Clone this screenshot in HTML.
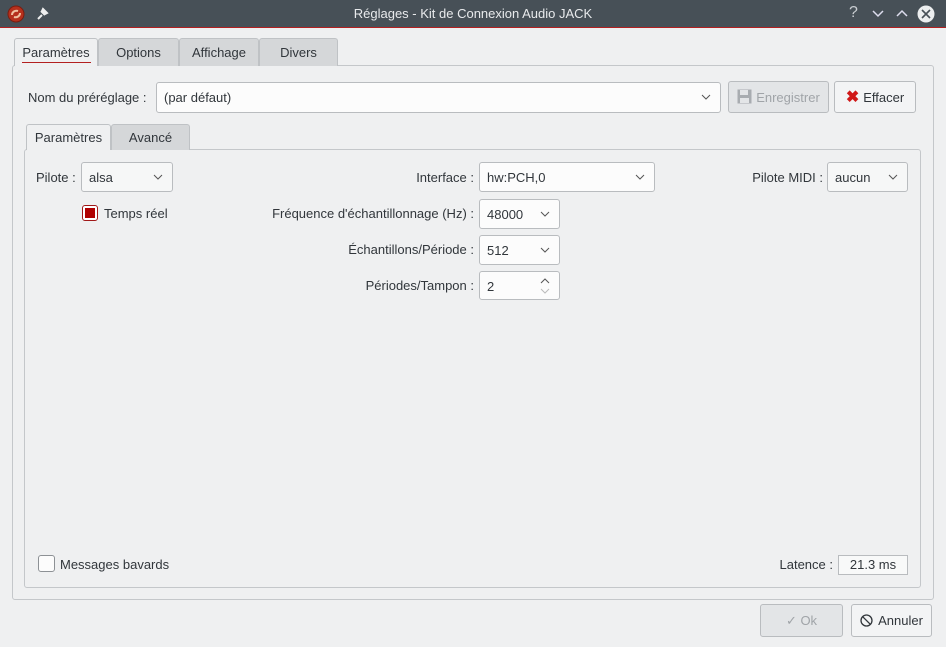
<!DOCTYPE html>
<html><head><meta charset="utf-8"><style>
*{box-sizing:border-box;margin:0;padding:0}
body{width:946px;height:647px;background:#eff0f1;font:13px "Liberation Sans",sans-serif;color:#31363b;position:relative;overflow:hidden}
.a{position:absolute}
.tb{left:0;top:0;width:946px;height:28px;background:#475057;border-bottom:1px solid #b32020}
.title{left:0;width:946px;top:6px;text-align:center;color:#e8eaec;font-size:13px}
.tab{position:absolute;background:#d5d7d9;border:1px solid #bfc2c5;border-bottom:none;border-radius:3px 3px 0 0;text-align:center;line-height:27px}
.tab.on{background:#eff0f1;z-index:2}
.pane{position:absolute;border:1px solid #c4c7ca;border-radius:3px;background:#eff0f1}
.cb{position:absolute;background:#f6f7f7;border:1px solid #b9bcbf;border-radius:3px;line-height:29px;padding-left:7px}
.cb.w{background:#fcfcfc}
.cb svg{position:absolute;right:9px;top:11px}
.btn{position:absolute;border:1px solid #b9bcbf;border-radius:3px;background:#f3f4f5;text-align:center;line-height:31px}
.lbl{position:absolute;text-align:right}
</style></head><body>
<div class="a tb"></div>
<div class="a title">Réglages - Kit de Connexion Audio JACK</div>
<svg class="a" style="left:7px;top:5px" width="18" height="18"><circle cx="9" cy="9" r="8" fill="#b6301c" stroke="#7a1d10"/><path d="M5 10c0-3 3-5 6-4M13 8c0 3-3 5-6 4" stroke="#f0c0a0" stroke-width="2" fill="none"/></svg>
<svg class="a" style="left:35px;top:7px" width="14" height="14"><path d="M3 12l4-4M6 4l4 4M8 2l4 4-2 1-3-3z" stroke="#eee" stroke-width="2" fill="#eee"/></svg>
<div class="a" style="left:849px;top:4px;color:#c9cdd1;font-size:16px">?</div>
<svg class="a" style="left:872px;top:9px" width="12" height="10"><path d="M1 2l5 5 5-5" stroke="#dde" fill="none" stroke-width="1.5"/></svg>
<svg class="a" style="left:896px;top:8px" width="12" height="10"><path d="M1 8l5-5 5 5" stroke="#dde" fill="none" stroke-width="1.5"/></svg>
<svg class="a" style="left:917px;top:5px" width="18" height="18"><circle cx="9" cy="9" r="8.5" fill="#eceeef"/><path d="M5 5l8 8M13 5l-8 8" stroke="#475057" stroke-width="1.6"/></svg>

<div class="pane" style="left:12px;top:65px;width:922px;height:535px"></div>
<div class="tab on" style="left:14px;top:38px;width:84px;height:28px">Paramètres<div class="a" style="left:7px;top:23px;width:69px;height:1px;background:#b32020"></div></div>
<div class="tab" style="left:98px;top:38px;width:81px;height:28px">Options</div>
<div class="tab" style="left:179px;top:38px;width:80px;height:28px">Affichage</div>
<div class="tab" style="left:259px;top:38px;width:79px;height:28px">Divers</div>

<div class="lbl" style="left:28px;top:90px">Nom du préréglage :</div>
<div class="cb w" style="left:156px;top:82px;width:565px;height:31px;line-height:30px">(par défaut)<svg width="10" height="7"><path d="M1 1l4 4 4-4" stroke="#555" fill="none"/></svg></div>
<div class="btn" style="left:728px;top:81px;width:101px;height:32px;background:#e3e5e7;color:#a0a4a8"><svg width="15" height="15" style="vertical-align:-2px;margin-right:4px"><rect x="0.5" y="0.5" width="14" height="14" fill="#a8acb0"/><rect x="3" y="1" width="8" height="5" fill="#e3e5e7"/><rect x="3" y="9" width="9" height="5" fill="#e3e5e7"/></svg>Enregistrer</div>
<div class="btn" style="left:834px;top:81px;width:82px;height:32px"><span style="color:#d01818;font-weight:bold;font-size:16px;margin-right:4px">✖</span>Effacer</div>

<div class="pane" style="left:24px;top:149px;width:897px;height:439px"></div>
<div class="tab on" style="left:26px;top:124px;width:85px;height:26px;line-height:26px">Paramètres</div>
<div class="tab" style="left:111px;top:124px;width:79px;height:26px;line-height:26px">Avancé</div>

<div class="lbl" style="left:36px;top:170px">Pilote :</div>
<div class="cb" style="left:81px;top:162px;width:92px;height:30px">alsa<svg width="10" height="7"><path d="M1 1l4 4 4-4" stroke="#555" fill="none"/></svg></div>
<div class="a" style="left:82px;top:205px;width:16px;height:16px;border:1px solid #a01818;border-radius:3px;background:#fff"><div class="a" style="left:2px;top:2px;width:10px;height:10px;background:#b00000"></div></div>
<div class="a" style="left:104px;top:206px">Temps réel</div>

<div class="lbl" style="right:472px;top:170px">Interface :</div>
<div class="cb w" style="left:479px;top:162px;width:176px;height:30px">hw:PCH,0<svg width="10" height="7"><path d="M1 1l4 4 4-4" stroke="#555" fill="none"/></svg></div>
<div class="lbl" style="right:472px;top:206px">Fréquence d'échantillonnage (Hz) :</div>
<div class="cb w" style="left:479px;top:199px;width:81px;height:30px">48000<svg width="10" height="7"><path d="M1 1l4 4 4-4" stroke="#555" fill="none"/></svg></div>
<div class="lbl" style="right:472px;top:242px">Échantillons/Période :</div>
<div class="cb w" style="left:479px;top:235px;width:81px;height:30px">512<svg width="10" height="7"><path d="M1 1l4 4 4-4" stroke="#555" fill="none"/></svg></div>
<div class="lbl" style="right:472px;top:278px">Périodes/Tampon :</div>
<div class="cb w" style="left:479px;top:271px;width:81px;height:29px">2<svg style="top:5px" width="10" height="18"><path d="M1 6l4-4 4 4" stroke="#555" fill="none"/><path d="M1 12l4 4 4-4" stroke="#bbb" fill="none"/></svg></div>

<div class="lbl" style="right:123px;top:170px">Pilote MIDI :</div>
<div class="cb" style="left:827px;top:162px;width:81px;height:30px">aucun<svg width="10" height="7"><path d="M1 1l4 4 4-4" stroke="#555" fill="none"/></svg></div>

<div class="a" style="left:38px;top:555px;width:17px;height:17px;border:1px solid #8d9195;border-radius:3px;background:#fcfcfc"></div>
<div class="a" style="left:60px;top:557px">Messages bavards</div>
<div class="lbl" style="right:113px;top:557px">Latence :</div>
<div class="a" style="left:838px;top:555px;width:70px;height:20px;border:1px solid #b9bcbf;background:#f8f9f9;text-align:center;line-height:18px">21.3 ms</div>

<div class="btn" style="left:760px;top:604px;width:83px;height:33px;background:#e3e5e7;color:#a0a4a8">✓ Ok</div>
<div class="btn" style="left:851px;top:604px;width:81px;height:33px"><svg width="13" height="13" style="vertical-align:-2px;margin-right:5px"><circle cx="6.5" cy="6.5" r="5.5" stroke="#31363b" stroke-width="1.3" fill="none"/><path d="M2.8 2.8l7.4 7.4" stroke="#31363b" stroke-width="1.3"/></svg>Annuler</div>
</body></html>
